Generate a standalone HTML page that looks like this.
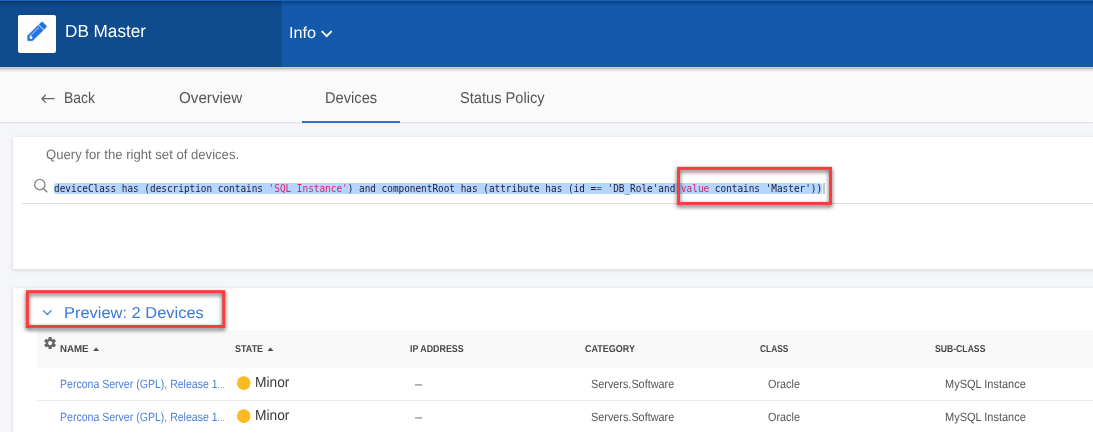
<!DOCTYPE html>
<html lang="en">
<head>
<meta charset="utf-8">
<title>DB Master - Devices</title>
<style>
html,body{margin:0;padding:0;}
body{width:1093px;height:434px;overflow:hidden;position:relative;background:#f5f6fa;font-family:"Liberation Sans",sans-serif;}
.abs{position:absolute;}
.t{text-rendering:geometricPrecision;position:absolute;white-space:nowrap;line-height:1;transform-origin:0 50%;display:block;}
#hdr{z-index:2;left:0;top:0;width:1093px;height:67px;background:#135aab;}
#hdrshadow{z-index:2;left:0;top:67px;width:1093px;height:6px;background:linear-gradient(rgba(0,0,0,.18) 0.5px,rgba(0,0,0,.215) 1.5px,rgba(0,0,0,.135) 2.5px,rgba(0,0,0,.07) 3.5px,rgba(0,0,0,.03) 4.5px,rgba(0,0,0,0) 5.5px);}
#hdrL{z-index:3;left:0;top:0;width:283px;height:67px;background:linear-gradient(90deg,#104b8e 0,#104b8e 281px,rgba(16,75,142,0) 282.3px);}
#topstrip{z-index:4;left:0;top:0;width:1093px;height:1px;background:#1965c5;}
#topshadow{z-index:4;left:0;top:1px;width:1093px;height:6px;background:linear-gradient(rgba(0,0,0,.30),rgba(0,0,0,.17) 30%,rgba(0,0,0,.06) 65%,rgba(0,0,0,0));}
#logo{z-index:5;left:18px;top:15px;width:38px;height:38px;background:#fff;border-radius:2px;}
#nav{left:0;top:67px;width:1093px;height:55px;background:#fafafa;box-shadow:0 1px 1.5px rgba(0,0,0,.10);}
#tabline{left:302px;top:121px;width:98px;height:2px;background:#2a72d9;}
.card{background:#fff;box-shadow:0 1px 4px rgba(0,0,0,.14);}
#card1{left:13px;top:137px;width:1090px;height:132px;}
#card2{left:13px;top:288px;width:1090px;height:160px;}
#qline{left:22px;top:203px;width:1071px;height:1px;background:#dcdcdc;}
#code{left:54.2px;top:183px;height:10.5px;line-height:12.5px;font-family:"DejaVu Sans Mono","Liberation Mono",monospace;font-size:10px;color:#1b1b3a;white-space:pre;background:#b5d5ff;border-radius:2.5px;transform-origin:0 0;transform:scaleX(0.9381);}
#code .r{color:#dd1f63;}
#caret{left:823px;top:183px;width:2px;height:10.5px;background:#c4c4c4;}
.redbox{border:2.5px solid #ee3b3e;box-shadow:2px 3px 5px rgba(0,0,0,.4);box-sizing:border-box;}
#rb1{left:677.2px;top:167.1px;width:154.6px;height:37.7px;}
#rb2{left:26.2px;top:290.5px;width:198.6px;height:36.4px;}
#thead{left:37px;top:330px;width:1056px;height:37.5px;background:#f8f8f9;}
.rowline{left:37px;width:1056px;height:1px;background:#ebebeb;}
.rbs{filter:drop-shadow(0px 2px 2px rgba(0,0,0,.68));overflow:visible;}
.dot{width:13px;height:13px;border-radius:50%;background:#fdb81f;}
.sortarrow{width:0;height:0;border-left:3px solid transparent;border-right:3px solid transparent;border-bottom:3.2px solid #555;}
</style>
</head>
<body>
<div id="hdr" class="abs"></div>
<div id="hdrL" class="abs"></div>
<div id="hdrshadow" class="abs"></div>
<div id="topstrip" class="abs"></div>
<div id="topshadow" class="abs"></div>
<div id="logo" class="abs">
<svg width="38" height="38" viewBox="0 0 38 38" style="position:absolute;left:0;top:0">
 <rect x="5.3" y="7.4" width="26.2" height="23.3" fill="none" stroke="#edf3fd" stroke-width="0.8" stroke-dasharray="1 1"/>
 <g transform="translate(9.5,25.85) rotate(-44.6)">
  <path d="M0.3,0 L3.6,-3.5 L18.6,-3.5 L18.6,3.5 L3.6,3.5 Z" fill="#2273e2" stroke="#2273e2" stroke-width="0.5" stroke-linejoin="round"/>
  <path d="M19.6,-3.5 H22.9 Q23.9,-3.5 23.9,-2.5 V2.5 Q23.9,3.5 22.9,3.5 H19.6 Z" fill="#2273e2" stroke="#2273e2" stroke-width="0.4"/>
  <line x1="6.6" y1="-1.55" x2="17.6" y2="-1.55" stroke="#dbe8fb" stroke-width="0.8"/>
  <path d="M4.8,0.1 m-1.0,0 a1.0,1.15 0 1,0 2.0,0 a1.0,1.15 0 1,0 -2.0,0 M5.3,-0.6 L6.0,-2.1" fill="#fff" stroke="#fff" stroke-width="0.9"/>
 </g>
</svg>
</div>
<svg class="abs" style="z-index:6;left:320px;top:29px" width="14" height="10" viewBox="0 0 14 10"><path d="M1.8,2.2 L6.7,7.2 L11.6,2.2" fill="none" stroke="#fff" stroke-width="1.9"/></svg>

<div id="nav" class="abs"></div>
<svg class="abs" style="left:40px;top:92px" width="16" height="14" viewBox="0 0 16 14"><path d="M1.7,6.7 H14.6 M5.8,2.8 L1.9,6.7 L5.8,10.6" fill="none" stroke="#666" stroke-width="1.25"/></svg>
<div id="tabline" class="abs"></div>

<div id="card1" class="abs card"></div>
<svg class="abs" style="left:33px;top:178px" width="16" height="16" viewBox="0 0 16 16"><circle cx="6.8" cy="6.6" r="5.2" fill="none" stroke="#858585" stroke-width="1.3"/><path d="M10.6,10.5 L14.2,14.3" stroke="#858585" stroke-width="1.5" fill="none"/></svg>
<div id="code" class="abs">deviceClass has (description contains <span class="r">'SQL Instance'</span>) and componentRoot has (attribute has (id =<span class="r">=</span> 'DB_Role'and <span class="r">value</span> contains 'Master'))</div>
<div id="caret" class="abs"></div>
<div id="qline" class="abs"></div>
<svg class="abs rbs" style="left:667px;top:157px" width="176" height="60"><rect x="11.55" y="11.35" width="152.0" height="35.1" fill="none" stroke="#fa3a3c" stroke-width="2.9"/></svg>

<div id="card2" class="abs card"></div>
<div id="thead" class="abs"></div>
<svg class="abs rbs" style="left:16px;top:280px" width="220" height="60"><rect x="11.35" y="11.65" width="196.4" height="34.8" fill="none" stroke="#fa3a3c" stroke-width="2.9"/></svg>
<svg class="abs" style="left:42px;top:309px" width="11" height="8" viewBox="0 0 11 8"><path d="M1.2,1.4 L5.3,5.6 L9.4,1.4" fill="none" stroke="#3b78d8" stroke-width="1.3"/></svg>
<svg class="abs" style="left:43.6px;top:337.1px" width="12.2" height="12.2" viewBox="-10 -10 20 20">
 <g fill="#666">
  <circle r="7"/>
  <rect x="-2.7" y="-9.8" width="5.4" height="19.6" rx="1.2"/><rect x="-2.7" y="-9.8" width="5.4" height="19.6" rx="1.2" transform="rotate(60)"/><rect x="-2.7" y="-9.8" width="5.4" height="19.6" rx="1.2" transform="rotate(120)"/>
 </g>
 <circle r="3.5" fill="#f8f8f9"/>
</svg>
<svg class="abs" style="left:90px;top:344px" width="14" height="10"><path d="M3.2,7.1 L9.1,7.1 L6.15,3.6 Z" fill="#4a4a4a"/></svg>
<svg class="abs" style="left:264px;top:344px" width="14" height="10"><path d="M3.5,7.1 L9.4,7.1 L6.45,3.6 Z" fill="#4a4a4a"/></svg>
<div class="abs rowline" style="top:400px"></div>
<svg class="abs" style="left:236px;top:375px" width="16" height="16"><circle cx="7.75" cy="8.1" r="6.85" fill="#fabc20"/></svg>
<svg class="abs" style="left:236px;top:408px" width="16" height="16"><circle cx="7.75" cy="8.1" r="6.85" fill="#fabc20"/></svg>
<span id="t_title" class="t" style="z-index:6;left:65.2px;top:22.60px;font-size:17.6px;font-weight:400;color:#ffffff;transform:scaleX(0.9746)">DB Master</span>
<span id="t_info" class="t" style="z-index:6;left:288.9px;top:25.96px;font-size:16px;font-weight:400;color:#ffffff;transform:scaleX(1.0155)">Info</span>
<span id="t_back" class="t" style="z-index:6;left:64.0px;top:90.81px;font-size:15.7px;font-weight:400;color:#555555;transform:scaleX(0.8885)">Back</span>
<span id="t_over" class="t" style="z-index:6;left:178.7px;top:90.81px;font-size:15.7px;font-weight:400;color:#555555;transform:scaleX(0.9680)">Overview</span>
<span id="t_dev" class="t" style="z-index:6;left:325.3px;top:90.81px;font-size:15.7px;font-weight:400;color:#555555;transform:scaleX(0.9337)">Devices</span>
<span id="t_stat" class="t" style="z-index:6;left:459.8px;top:90.81px;font-size:15.7px;font-weight:400;color:#555555;transform:scaleX(0.9318)">Status Policy</span>
<span id="t_query" class="t" style="z-index:6;left:46.4px;top:148.09px;font-size:13.6px;font-weight:400;color:#707070;transform:scaleX(0.9644)">Query for the right set of devices.</span>
<span id="t_prev" class="t" style="z-index:6;left:64.2px;top:305.63px;font-size:15.8px;font-weight:400;color:#3b78d8;transform:scaleX(1.0407)">Preview: 2 Devices</span>
<span id="h_name" class="t" style="z-index:6;left:60.1px;top:344.74px;font-size:10.0px;font-weight:700;color:#474747;transform:scaleX(0.9710)">NAME</span>
<span id="h_state" class="t" style="z-index:6;left:235.0px;top:344.74px;font-size:10.0px;font-weight:700;color:#474747;transform:scaleX(0.8979)">STATE</span>
<span id="h_ip" class="t" style="z-index:6;left:410.0px;top:344.74px;font-size:10.0px;font-weight:700;color:#474747;transform:scaleX(0.8848)">IP ADDRESS</span>
<span id="h_cat" class="t" style="z-index:6;left:585.2px;top:344.74px;font-size:10.0px;font-weight:700;color:#474747;transform:scaleX(0.8981)">CATEGORY</span>
<span id="h_class" class="t" style="z-index:6;left:760.0px;top:344.74px;font-size:10.0px;font-weight:700;color:#474747;transform:scaleX(0.8376)">CLASS</span>
<span id="h_sub" class="t" style="z-index:6;left:935.1px;top:344.74px;font-size:10.0px;font-weight:700;color:#474747;transform:scaleX(0.8638)">SUB-CLASS</span>
<span id="r0_name" class="t" style="z-index:6;left:60.2px;top:378.24px;font-size:12px;font-weight:400;color:#4a7fd6;transform:scaleX(0.8785)">Percona Server (GPL), Release 1<span style="font-size:.72em">…</span></span>
<span id="r0_minor" class="t" style="z-index:6;left:255.4px;top:375.81px;font-size:14.4px;font-weight:400;color:#3a3a3a;transform:scaleX(0.9560)">Minor</span>
<span id="r0_ip" class="t" style="z-index:6;left:415.3px;top:378.24px;font-size:12px;font-weight:400;color:#555555;transform:scaleX(0.5917)">—</span>
<span id="r0_cat" class="t" style="z-index:6;left:591.2px;top:378.24px;font-size:12px;font-weight:400;color:#555555;transform:scaleX(0.9039)">Servers.Software</span>
<span id="r0_class" class="t" style="z-index:6;left:768.4px;top:378.24px;font-size:12px;font-weight:400;color:#555555;transform:scaleX(0.9054)">Oracle</span>
<span id="r0_sub" class="t" style="z-index:6;left:945.4px;top:378.24px;font-size:12px;font-weight:400;color:#555555;transform:scaleX(0.9154)">MySQL Instance</span>
<span id="r1_name" class="t" style="z-index:6;left:60.2px;top:411.24px;font-size:12px;font-weight:400;color:#4a7fd6;transform:scaleX(0.8785)">Percona Server (GPL), Release 1<span style="font-size:.72em">…</span></span>
<span id="r1_minor" class="t" style="z-index:6;left:255.4px;top:408.81px;font-size:14.4px;font-weight:400;color:#3a3a3a;transform:scaleX(0.9560)">Minor</span>
<span id="r1_ip" class="t" style="z-index:6;left:415.3px;top:411.24px;font-size:12px;font-weight:400;color:#555555;transform:scaleX(0.5917)">—</span>
<span id="r1_cat" class="t" style="z-index:6;left:591.2px;top:411.24px;font-size:12px;font-weight:400;color:#555555;transform:scaleX(0.9039)">Servers.Software</span>
<span id="r1_class" class="t" style="z-index:6;left:768.4px;top:411.24px;font-size:12px;font-weight:400;color:#555555;transform:scaleX(0.9054)">Oracle</span>
<span id="r1_sub" class="t" style="z-index:6;left:945.4px;top:411.24px;font-size:12px;font-weight:400;color:#555555;transform:scaleX(0.9154)">MySQL Instance</span>
<div class="abs" style="z-index:20;left:0;top:432px;width:1093px;height:2px;background:#fff"></div>
</body>
</html>
